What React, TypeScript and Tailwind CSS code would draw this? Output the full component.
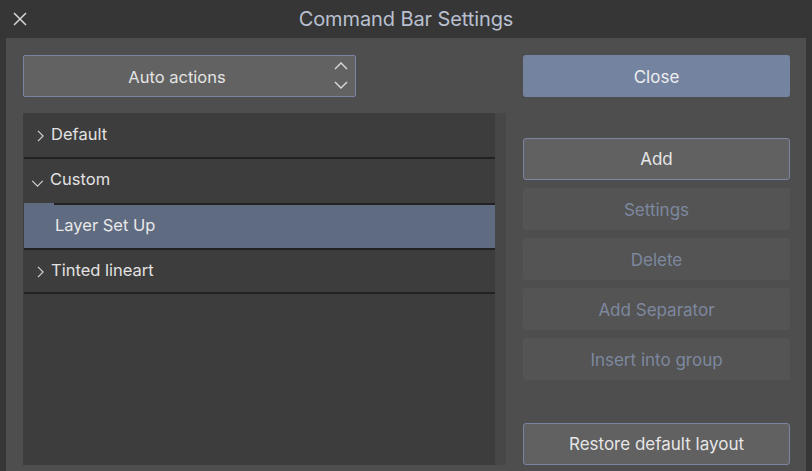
import React from "react";

const Chevron = ({ dir, className }: { dir: "up" | "down" | "right"; className?: string }) => {
  const d =
    dir === "up" ? "M1 7 L7 1 L13 7" : dir === "down" ? "M1 1 L7 7 L13 1" : "M1 1 L7 7 L1 13";
  const box = dir === "right" ? "0 0 8 14" : "0 0 14 8";
  return (
    <svg viewBox={box} className={className} fill="none" stroke="currentColor" strokeWidth="1.4">
      <path d={d} />
    </svg>
  );
};

const Sep = ({ indent }: { indent?: boolean }) => (
  <div className={`h-[2px] ${indent ? "ml-[30px]" : ""} bg-[#222222]`} />
);

const ActionButton = ({ label, active }: { label: string; active?: boolean }) =>
  active ? (
    <button className="h-[42px] w-full rounded-[3px] border border-[#7a85a0] bg-[#616161] pt-[2px] text-[17px] text-[#e6e6e6]">
      {label}
    </button>
  ) : (
    <button className="h-[42px] w-full rounded-[3px] bg-[#545454] pt-[3px] text-[17px] text-[#7d889f]">
      {label}
    </button>
  );

const App = () => {
  return (
    <div
      className="flex h-[471px] w-[812px] flex-col bg-[#363636] text-[#e2e2e2]"
      style={{ fontFamily: "Inter, 'Noto Sans', sans-serif" }}
    >
      <div className="relative flex h-[38px] shrink-0 items-center justify-center">
        <svg viewBox="0 0 14 14" className="absolute left-[13px] top-[12px] h-[14px] w-[14px] text-[#d8d8d8]" stroke="currentColor" strokeWidth="1.5">
          <path d="M1 1 L13 13 M13 1 L1 13" />
        </svg>
        <h1 className="text-[20px] tracking-[-0.1px] text-[#b9c0d0]">Command Bar Settings</h1>
      </div>

      <div className="mx-[6px] flex flex-1 gap-[17px] bg-[#4e4e4e] pl-[17px] pr-[16px] pt-[17px] pb-[6px]">
        <div className="flex w-[483px] flex-col">
          <button className="relative flex h-[42px] w-[333px] items-center justify-center rounded-[2px] border border-[#7a85a0] bg-[#626262] pr-[25px] pt-[2px] text-[16.5px] text-[#e4e4e4]">
            Auto actions
            <span className="absolute right-[7px] top-[6px] flex flex-col gap-[11px] text-[#dcdcdc]">
              <Chevron dir="up" className="h-[8px] w-[14px]" />
              <Chevron dir="down" className="h-[8px] w-[14px]" />
            </span>
          </button>

          <div className="mt-[16px] flex flex-1 bg-[#3d3d3d] pl-[1px]">
            <div className="flex flex-1 flex-col text-[16.5px]">
              <div className="flex h-[44px] items-center pb-[2px] pl-[13px]">
                <Chevron dir="right" className="mr-[7px] mt-[3px] h-[12px] w-[7px] text-[#d0d0d0]" />
                Default
              </div>
              <Sep />
              <div className="flex h-[44px] items-center pb-[3px] pl-[7px]">
                <Chevron dir="down" className="mr-[6px] mt-[8px] h-[7px] w-[13px] text-[#d0d0d0]" />
                Custom
              </div>
              <div className="bg-[#5f6b80]">
                <Sep indent />
              </div>
              <div className="flex h-[43px] items-center bg-[#5f6b80] pb-[3px] pl-[31px] text-[#e8e8e8]">Layer Set Up</div>
              <Sep />
              <div className="flex h-[42px] items-center pb-[2px] pl-[13px]">
                <Chevron dir="right" className="mr-[7px] mt-[3px] h-[12px] w-[7px] text-[#d0d0d0]" />
                Tinted lineart
              </div>
              <Sep />
            </div>
            <div className="w-[11px] bg-[#474747]" />
          </div>
        </div>

        <div className="flex flex-1 flex-col">
          <button className="h-[42px] w-full rounded-[3px] bg-[#7483a0] pt-[3px] text-[17px] text-[#eeeeee]">Close</button>
          <div className="mt-[41px] flex flex-col gap-[8px]">
            <ActionButton label="Add" active />
            <ActionButton label="Settings" />
            <ActionButton label="Delete" />
            <ActionButton label="Add Separator" />
            <ActionButton label="Insert into group" />
          </div>
          <div className="mt-auto">
            <ActionButton label="Restore default layout" active />
          </div>
        </div>
      </div>
    </div>
  );
};

export default App;
